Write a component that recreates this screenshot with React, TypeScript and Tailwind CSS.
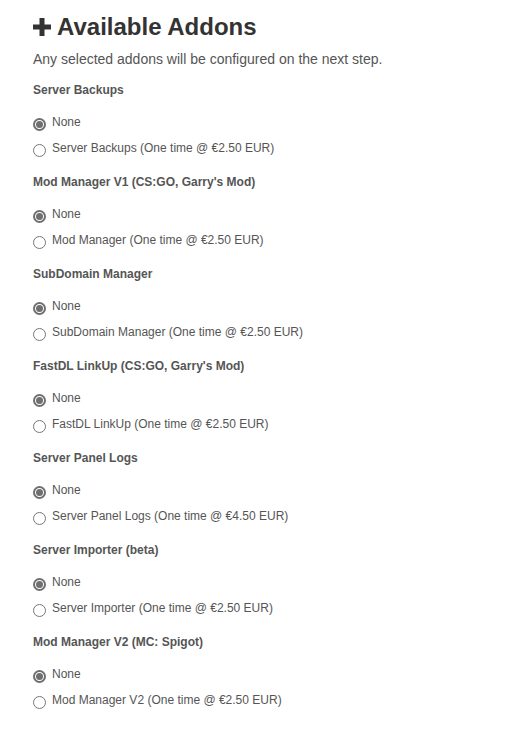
import { useState } from 'react'

interface Addon {
  id: string
  title: string
  option: string
  price: string
}

const addons: Addon[] = [
  { id: 'backups', title: 'Server Backups', option: 'Server Backups', price: '€2.50' },
  { id: 'modv1', title: "Mod Manager V1 (CS:GO, Garry's Mod)", option: 'Mod Manager', price: '€2.50' },
  { id: 'subdomain', title: 'SubDomain Manager', option: 'SubDomain Manager', price: '€2.50' },
  { id: 'fastdl', title: "FastDL LinkUp (CS:GO, Garry's Mod)", option: 'FastDL LinkUp', price: '€2.50' },
  { id: 'logs', title: 'Server Panel Logs', option: 'Server Panel Logs', price: '€4.50' },
  { id: 'importer', title: 'Server Importer (beta)', option: 'Server Importer', price: '€2.50' },
  { id: 'modv2', title: 'Mod Manager V2 (MC: Spigot)', option: 'Mod Manager V2', price: '€2.50' },
]

function Radio({ checked }: { checked: boolean }) {
  return checked ? (
    <span className="w-[13px] h-[13px] rounded-full border-2 border-[#6f6f6f] bg-white flex items-center justify-center shrink-0 translate-y-[2px]">
      <span className="w-[7px] h-[7px] rounded-full bg-[#6f6f6f]" />
    </span>
  ) : (
    <span className="w-[13px] h-[13px] rounded-full border border-[#767676] bg-white shrink-0 translate-y-[2px]" />
  )
}

export default function App() {
  const [selected, setSelected] = useState<Record<string, boolean>>({})

  return (
    <div className="min-h-[733px] bg-white pl-[33px] pt-[11px] font-['Liberation_Sans',Arial,sans-serif]">
      {/* Header */}
      <h1 className="flex items-center gap-[6px] h-[32px] text-[24px] font-bold text-[#333333]">
        <svg width="18" height="18" viewBox="0 0 18 18" className="shrink-0">
          <rect x="6.5" y="0" width="5" height="18" fill="#333333" />
          <rect x="0" y="6.5" width="18" height="5" fill="#333333" />
        </svg>
        Available Addons
      </h1>
      <p className="mt-[6px] h-[20px] leading-[20px] text-[14px] text-[#555555]">
        Any selected addons will be configured on the next step.
      </p>

      {/* Addon groups */}
      <div className="mt-[10px]">
        {addons.map(addon => (
          <div key={addon.id} className="mb-[10px]">
            <div className="h-[20px] leading-[22px] text-[12px] font-bold text-[#555555]">
              {addon.title}
            </div>
            <div className="mt-[10px]">
              <label
                className="flex items-center gap-[6px] h-[26px] text-[12px] text-[#555555] cursor-pointer"
                onClick={() => setSelected({ ...selected, [addon.id]: false })}
              >
                <Radio checked={!selected[addon.id]} />
                None
              </label>
              <label
                className="flex items-center gap-[6px] h-[26px] text-[12px] text-[#555555] cursor-pointer"
                onClick={() => setSelected({ ...selected, [addon.id]: true })}
              >
                <Radio checked={!!selected[addon.id]} />
                {addon.option} (One time @ {addon.price} EUR)
              </label>
            </div>
          </div>
        ))}
      </div>
    </div>
  )
}
